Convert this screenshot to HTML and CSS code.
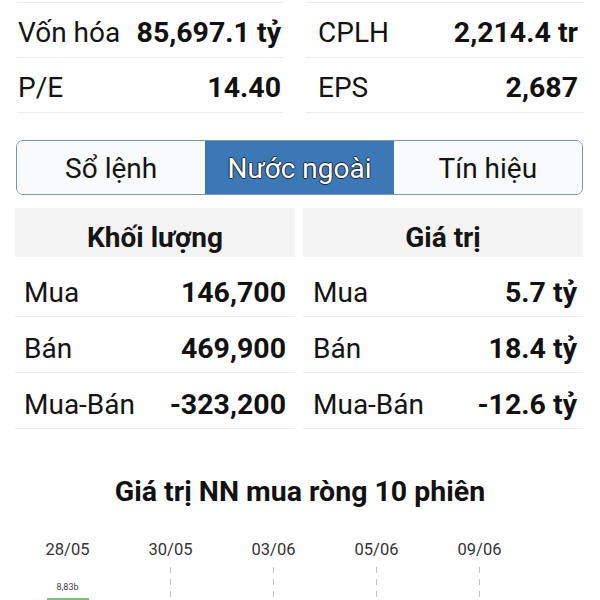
FILE: index.html
```html
<!DOCTYPE html>
<html lang="vi">
<head>
    <meta charset="UTF-8">
    <meta name="viewport" content="width=device-width, initial-scale=1.0">
    <title>Nước ngoài</title>
    <link rel="stylesheet" href="styles.css">
</head>
<body>
    <div class="stats">
        <div class="stat-col">
            <div class="stat"><span class="label">Vốn hóa</span><span class="value">85,697.1 tỷ</span></div>
            <div class="stat"><span class="label">P/E</span><span class="value">14.40</span></div>
        </div>
        <div class="stat-col right">
            <div class="stat"><span class="label">CPLH</span><span class="value">2,214.4 tr</span></div>
            <div class="stat"><span class="label">EPS</span><span class="value">2,687</span></div>
        </div>
    </div>

    <div class="tabs">
        <div class="tab">Sổ lệnh</div>
        <div class="tab active">Nước ngoài</div>
        <div class="tab">Tín hiệu</div>
    </div>

    <div class="tables">
        <div class="table">
            <div class="table-head">Khối lượng</div>
            <div class="row"><span class="label">Mua</span><span class="value">146,700</span></div>
            <div class="row"><span class="label">Bán</span><span class="value">469,900</span></div>
            <div class="row"><span class="label">Mua-Bán</span><span class="value">-323,200</span></div>
        </div>
        <div class="table right">
            <div class="table-head">Giá trị</div>
            <div class="row"><span class="label">Mua</span><span class="value">5.7 tỷ</span></div>
            <div class="row"><span class="label">Bán</span><span class="value">18.4 tỷ</span></div>
            <div class="row"><span class="label">Mua-Bán</span><span class="value">-12.6 tỷ</span></div>
        </div>
    </div>

    <h3 class="chart-title">Giá trị NN mua ròng 10 phiên</h3>

    <div class="chart">
        <div class="session">
            <div class="date">28/05</div>
            <div class="bar-label">8,83b</div>
            <div class="bar"></div>
        </div>
        <div class="session">
            <div class="date">30/05</div>
            <div class="dash"></div>
        </div>
        <div class="session">
            <div class="date">03/06</div>
            <div class="dash"></div>
        </div>
        <div class="session">
            <div class="date">05/06</div>
            <div class="dash"></div>
        </div>
        <div class="session">
            <div class="date">09/06</div>
            <div class="dash"></div>
        </div>
    </div>
</body>
</html>
```

FILE: styles.css
```css
* {
    box-sizing: border-box;
}
body {
    font-family: Roboto, "Liberation Sans", sans-serif;
    background-color: white;
    color: #141414;
    margin: 0;
    overflow: hidden;
}

/* thong tin co ban */
.stats {
    display: grid;
    grid-template-columns: 266px 1fr;
    column-gap: 23px;
    padding: 2px 16px 0 17px;
}
.stat-col {
    border-top: 1px solid #ececec;
}
.stat {
    display: flex;
    justify-content: space-between;
    align-items: center;
    height: 55px;
    padding: 5px 2px 0 1px;
    border-bottom: 1px solid #ececec;
    font-size: 28px;
}
.stat-col.right .stat {
    padding: 5px 6px 0 12px;
}
.value {
    font-weight: bold;
    font-size: 28.5px;
    color: #111;
}

/* tabs */
.tabs {
    display: flex;
    margin: 27px 17px 0 16px;
    height: 55px;
    border: 1.5px solid #7c94ac;
    border-radius: 7px;
    overflow: hidden;
}
.tab {
    flex: 1;
    display: flex;
    align-items: center;
    justify-content: center;
    background-color: #f8fafc;
    font-size: 28px;
    padding-top: 2px;
}
.tab.active {
    background-color: #3b78b5;
    color: white;
    text-shadow: -1px 0 #1e2a36, 1px 0 #1e2a36, 0 -1px #1e2a36, 0 1px #1e2a36;
}

/* bang khoi luong / gia tri */
.tables {
    display: grid;
    grid-template-columns: 1fr 1fr;
    column-gap: 8px;
    padding: 0 17px 0 15px;
    margin-top: 13px;
}
.table-head {
    height: 49px;
    display: flex;
    align-items: center;
    justify-content: center;
    padding-top: 9px;
    margin-bottom: 4px;
    background-color: #f3f3f3;
    font-weight: bold;
    font-size: 28px;
}
.row {
    display: flex;
    justify-content: space-between;
    align-items: center;
    height: 56px;
    padding: 8px 9px 0 9px;
    border-bottom: 1px solid #ececec;
    font-size: 28px;
}
.table.right .row {
    padding: 8px 6px 0 10px;
}

/* bieu do */
.chart-title {
    margin: 47px 0 0;
    text-align: center;
    font-size: 28.5px;
    line-height: 32px;
    font-weight: bold;
    color: #111;
}
.chart {
    display: flex;
    padding-left: 16px;
    margin-top: 32px;
}
.session {
    width: 103px;
    display: flex;
    flex-direction: column;
    align-items: center;
}
.date {
    font-size: 16.5px;
    line-height: 20px;
    color: #333;
}
.dash {
    width: 1px;
    height: 40px;
    margin-top: 7px;
    background: repeating-linear-gradient(to bottom, #c4c4c4 0 6px, transparent 6px 12px);
}
.bar-label {
    margin-top: 22px;
    font-size: 9px;
    line-height: 11px;
    color: #444;
}
.bar {
    width: 42px;
    height: 40px;
    margin-top: 5px;
    background-color: #7cc47a;
}
```
